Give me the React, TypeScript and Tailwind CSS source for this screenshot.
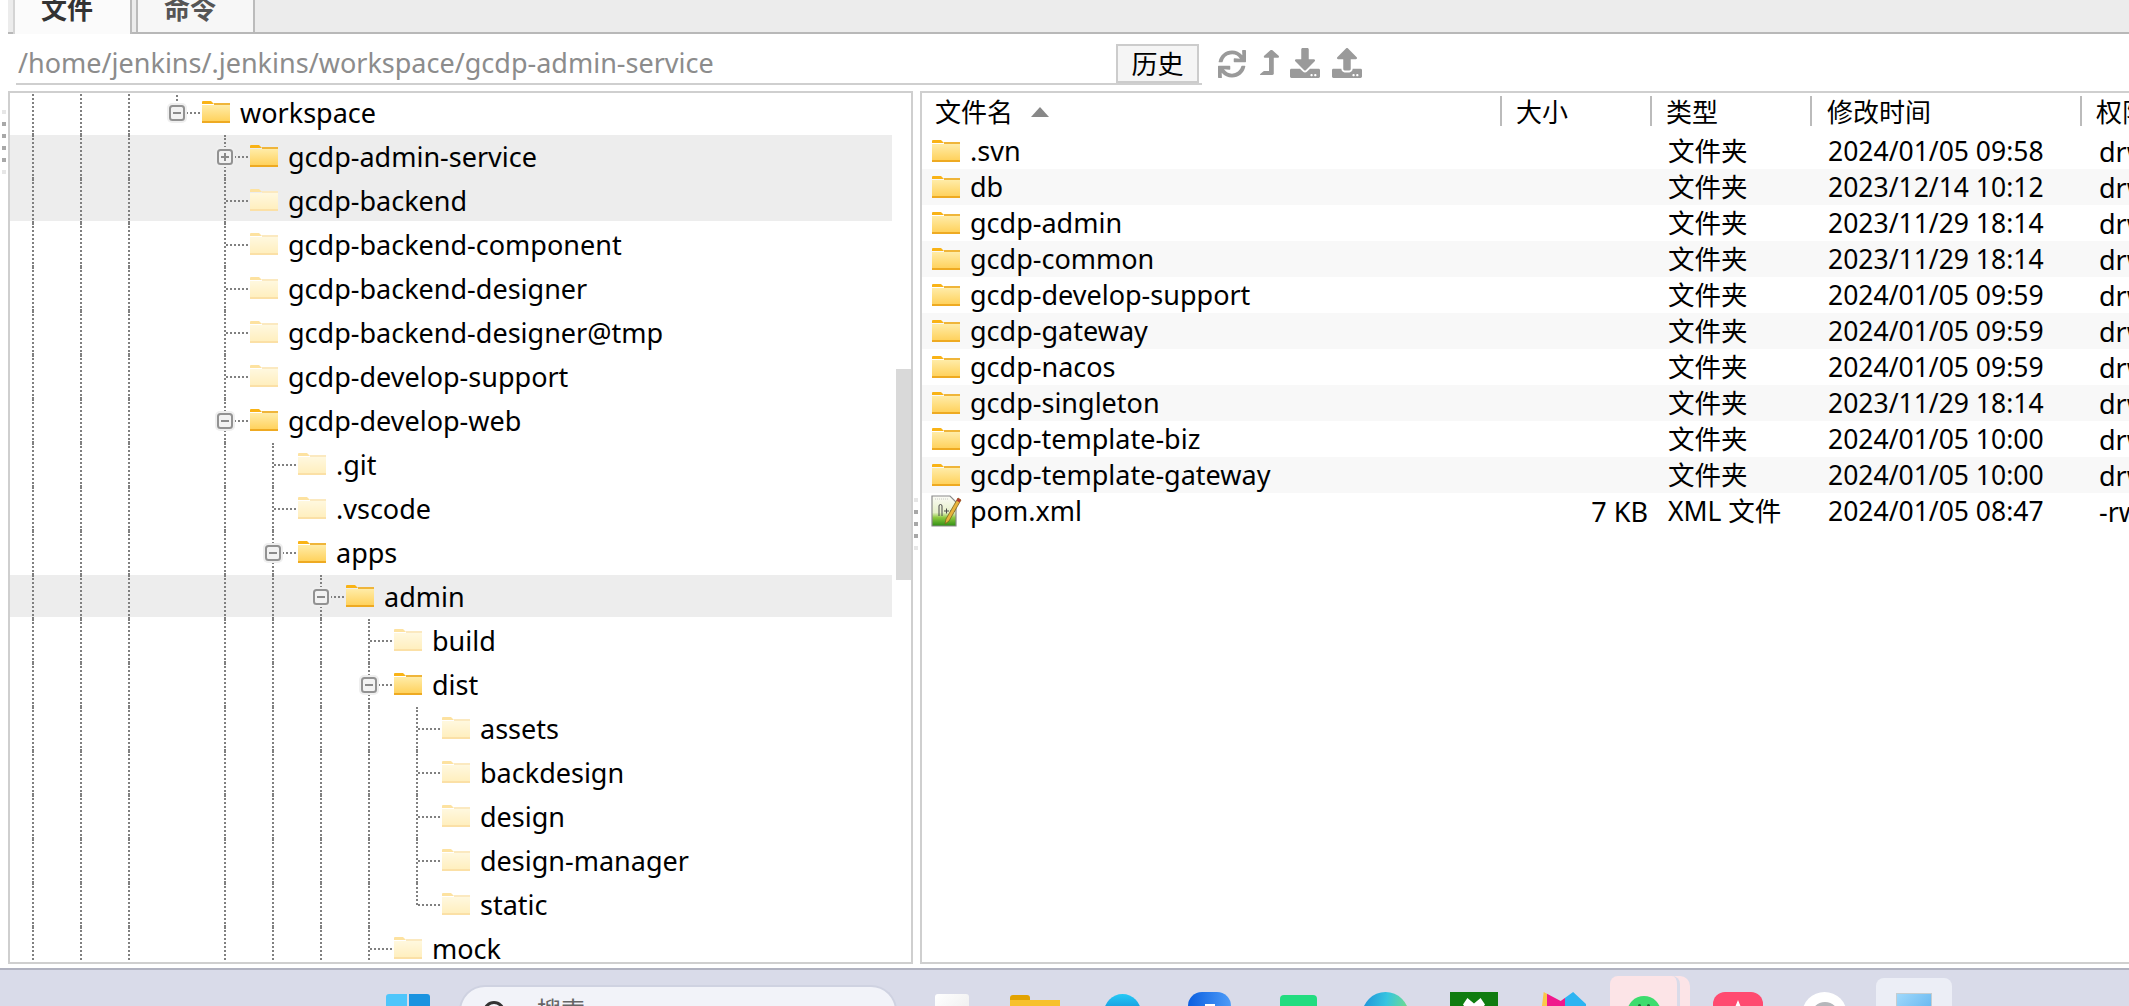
import React from "react";
import { FaSync, FaLevelUpAlt, FaDownload, FaUpload } from "react-icons/fa";

const FONT = "font-['Noto_Sans','Noto_Sans_CJK_SC',sans-serif]";

function Folder({ pale = false }: { pale?: boolean }) {
  const id = pale ? "fp" : "fa";
  return (
    <svg width="28" height="22" viewBox="0 0 28 22" className="shrink-0 block">
      <defs>
        <linearGradient id={id} x1="0" y1="0" x2="0" y2="1">
          <stop offset="0" stopColor={pale ? "#fff8df" : "#ffeca8"} />
          <stop offset="1" stopColor={pale ? "#ffeebb" : "#ffcf55"} />
        </linearGradient>
      </defs>
      <path d="M0 1a1 1 0 0 1 1-1h8l3 3h-12z" fill={pale ? "#fde2a0" : "#f9b316"} />
      <path d="M12 2h16v2h-16z" fill={pale ? "#fbe9c0" : "#efb53a"} />
      <rect x="0" y="4" width="28" height="18" fill={`url(#${id})`} />
      <rect x="0" y="20" width="28" height="2" fill={pale ? "#fbe0a6" : "#eeaa22"} />
    </svg>
  );
}

function PlusMinus({ plus = false }: { plus?: boolean }) {
  return (
    <svg width="20" height="20" viewBox="0 0 20 20" className="block">
      <rect x="0" y="0" width="20" height="20" rx="5" fill="#efefef" />
      <rect x="3" y="3" width="14" height="14" rx="2.5" fill="#f2f2f2" stroke="#929292" strokeWidth="2" />
      <rect x="6" y="9" width="8" height="2" fill="#8a8a8a" />
      {plus && <rect x="9" y="6" width="2" height="8" fill="#8a8a8a" />}
    </svg>
  );
}

type Tree = { label: string; d: number; box?: "plus" | "minus"; active?: boolean; hl?: "full" | "short"; end?: "half" };

const treeRows: Tree[] = [
  { label: "workspace", d: -1, box: "minus", active: true, end: "half" },
  { label: "gcdp-admin-service", d: 0, box: "plus", active: true, hl: "full" },
  { label: "gcdp-backend", d: 0, hl: "short" },
  { label: "gcdp-backend-component", d: 0 },
  { label: "gcdp-backend-designer", d: 0 },
  { label: "gcdp-backend-designer@tmp", d: 0 },
  { label: "gcdp-develop-support", d: 0 },
  { label: "gcdp-develop-web", d: 0, box: "minus", active: true },
  { label: ".git", d: 1 },
  { label: ".vscode", d: 1 },
  { label: "apps", d: 1, box: "minus", active: true },
  { label: "admin", d: 2, box: "minus", active: true, hl: "short" },
  { label: "build", d: 3 },
  { label: "dist", d: 3, box: "minus", active: true },
  { label: "assets", d: 4 },
  { label: "backdesign", d: 4 },
  { label: "design", d: 4 },
  { label: "design-manager", d: 4 },
  { label: "static", d: 4, end: "half" },
  { label: "mock", d: 3 },
];

function Guide() {
  return <div className="w-12 h-full shrink-0 border-l-2 border-dotted border-[#808080]" />;
}

function TreeRow({ row }: { row: Tree }) {
  const bg =
    row.hl === "full"
      ? "bg-[#ededed]"
      : row.hl === "short"
        ? "bg-[linear-gradient(#ededed_42px,transparent_42px)]"
        : "";
  return (
    <div className={`flex h-[44px] pl-[22px] items-center ${bg}`}>
      <Guide />
      <Guide />
      <Guide />
      {row.d >= 0 && <div className="w-12 h-full shrink-0" />}
      {Array.from({ length: Math.max(row.d, 0) }).map((_, i) => (
        <Guide key={i} />
      ))}
      <div className="relative w-[26px] h-full shrink-0">
        <div
          className={`absolute left-0 top-0 border-l-2 border-dotted border-[#808080] ${
            row.end === "half" ? "h-[22px]" : "h-[44px]"
          }`}
        />
        <div className="absolute left-[2px] right-[2px] top-[21px] border-t-2 border-dotted border-[#808080]" />
        {row.box && (
          <div className="absolute left-[-9px] top-[12px]">
            <PlusMinus plus={row.box === "plus"} />
          </div>
        )}
      </div>
      <div className="-mt-[2px]">
        <Folder pale={!row.active} />
      </div>
      <span className="ml-[10px] -mt-[1px] text-[27px] leading-none text-black whitespace-nowrap">{row.label}</span>
    </div>
  );
}

type FileRow = { name: string; size?: string; type: string; date: string; perm: string; pom?: boolean };
const files: FileRow[] = [
  { name: ".svn", type: "文件夹", date: "2024/01/05 09:58", perm: "drwxr-xr-x" },
  { name: "db", type: "文件夹", date: "2023/12/14 10:12", perm: "drwxr-xr-x" },
  { name: "gcdp-admin", type: "文件夹", date: "2023/11/29 18:14", perm: "drwxr-xr-x" },
  { name: "gcdp-common", type: "文件夹", date: "2023/11/29 18:14", perm: "drwxr-xr-x" },
  { name: "gcdp-develop-support", type: "文件夹", date: "2024/01/05 09:59", perm: "drwxr-xr-x" },
  { name: "gcdp-gateway", type: "文件夹", date: "2024/01/05 09:59", perm: "drwxr-xr-x" },
  { name: "gcdp-nacos", type: "文件夹", date: "2024/01/05 09:59", perm: "drwxr-xr-x" },
  { name: "gcdp-singleton", type: "文件夹", date: "2023/11/29 18:14", perm: "drwxr-xr-x" },
  { name: "gcdp-template-biz", type: "文件夹", date: "2024/01/05 10:00", perm: "drwxr-xr-x" },
  { name: "gcdp-template-gateway", type: "文件夹", date: "2024/01/05 10:00", perm: "drwxr-xr-x" },
  { name: "pom.xml", size: "7 KB", type: "XML 文件", date: "2024/01/05 08:47", perm: "-rw-r--r--", pom: true },
];

function PomIcon() {
  return (
    <svg width="31" height="32" viewBox="0 0 31 32" className="block shrink-0">
      <defs>
        <linearGradient id="pg" x1="0" y1="0" x2="0" y2="1">
          <stop offset="0" stopColor="#fbfbf6" />
          <stop offset="0.55" stopColor="#e6f0c8" />
          <stop offset="0.72" stopColor="#8cc83f" />
          <stop offset="1" stopColor="#2f8f14" />
        </linearGradient>
      </defs>
      <path d="M1 1h18l6 6v24h-24z" fill="url(#pg)" stroke="#8a8a8a" strokeWidth="1.2" />
      <path d="M4 4h13" stroke="#c8c8c8" strokeWidth="1" strokeDasharray="1 1" />
      <path d="M8 21v-10a1.5 1.5 0 0 1 3 0v10M13 16h5M15.500 13.500v5M19 16h5M21.500 13.500v5" stroke="#4a4a4a" strokeWidth="1" fill="none" />
      <path d="M27 3l3 2-12 21-4 3 1-5z" fill="#e8b33c" stroke="#7a6420" strokeWidth="0.8" />
      <path d="M27 3l3 2-1.500 2.500-3-2z" fill="#b5392f" />
    </svg>
  );
}

function Dots({ count }: { count: number }) {
  return (
    <div className="flex flex-col gap-[8px]">
      {Array.from({ length: count }).map((_, i) => (
        <div
          key={i}
          className={`w-[4px] h-[4px] ${i === 0 || i === count - 1 ? "bg-[#e6e6e6]" : "bg-[#a8a8a8]"}`}
        />
      ))}
    </div>
  );
}

const colClass = "grid grid-cols-[578px_150px_160px_270px_200px]";

function Taskbar() {
  return (
    <div className="flex items-start h-[38px] border-t-2 border-[#b0b2c0] bg-[#d9dbe9] overflow-hidden shrink-0">
      <div className="ml-[386px] mt-[24px] grid grid-cols-2 gap-[2px] w-[44px] shrink-0">
        <div className="h-[22px] bg-[#4fc6fb] rounded-tl-[3px]" />
        <div className="h-[22px] bg-[#1a93e0] rounded-tr-[3px]" />
      </div>
      <div className="ml-[29px] mt-[15px] w-[438px] h-[44px] rounded-t-[26px] bg-[#f2f3f9] border-2 border-b-0 border-[#cfd2e1] flex items-start pl-[22px] pt-[14px] shrink-0">
        <div className="w-[22px] h-[22px] rounded-full border-[3px] border-[#333] shrink-0" />
        <span className="ml-[32px] -mt-[3px] text-[24px] leading-none text-[#666]">搜索</span>
      </div>
      <div className="ml-[38px] mt-[24px] w-[34px] h-[30px] rounded-t-[3px] bg-[linear-gradient(135deg,#ffffff,#ebebeb)] shrink-0" />
      <div className="ml-[41px] mt-[25px] w-[50px] h-[24px] shrink-0">
        <div className="w-[20px] h-[5px] bg-[#e2a200] rounded-t-[3px]" />
        <div className="w-full h-[20px] bg-[#f7c12d]" />
      </div>
      <div className="ml-[44px] mt-[24px] w-[37px] h-[30px] rounded-t-full bg-[linear-gradient(#25c9f5,#0c6fc8)] shrink-0" />
      <div className="ml-[47px] mt-[22px] w-[43px] h-[30px] rounded-t-[14px] bg-[linear-gradient(90deg,#0b5fe0,#4e9cf8)] flex justify-center items-start pt-[12px] shrink-0">
        <div className="w-[10px] h-[12px] bg-white" />
      </div>
      <div className="ml-[49px] mt-[25px] w-[37px] h-[30px] rounded-t-[4px] bg-[#22dc80] shrink-0" />
      <div className="ml-[45px] mt-[22px] w-[47px] h-[30px] rounded-t-full bg-[linear-gradient(100deg,#1c8fd8,#36c5e0,#7be07e)] shrink-0" />
      <div className="ml-[41px] mt-[22px] w-[48px] h-[30px] bg-[#107c10] flex justify-center pt-[6px] shrink-0">
        <div className="w-[22px] h-[22px] bg-white [clip-path:polygon(50%_25%,80%_0,100%_30%,50%_100%,0_30%,20%_0)]" />
      </div>
      <div className="ml-[42px] mt-[22px] w-[46px] h-[30px] bg-[linear-gradient(90deg,#fbc84a_0_15%,#f0188c_15%_55%,#2db4f2_55%)] [clip-path:polygon(8%_0,45%_30%,72%_0,100%_40%,100%_100%,0_100%)] flex justify-center pt-[16px] shrink-0">
        <div className="w-[28px] h-[14px] bg-[#1a1020]" />
      </div>
      <div className="ml-[24px] mt-[6px] w-[80px] h-[40px] shrink-0 relative">
        <div className="absolute right-0 top-0 w-[20px] h-full rounded-tr-[10px] bg-[#fce4e7]" />
        <div className="absolute left-0 top-0 w-[70px] h-full rounded-t-[8px] bg-[#fce4e7] border-r-[3px] border-[#d9dbe9] flex justify-center pt-[20px]">
          <div className="w-[34px] h-[34px] rounded-full bg-[#3ddc6e] flex justify-center gap-[6px] pt-[8px]">
            <div className="w-[3px] h-[5px] rounded-full bg-[#1d6e37]" />
            <div className="w-[3px] h-[5px] rounded-full bg-[#1d6e37]" />
          </div>
        </div>
      </div>
      <div className="ml-[23px] mt-[22px] w-[50px] h-[30px] rounded-t-[12px] bg-[#ff4b70] flex justify-center pt-[8px] shrink-0">
        <div className="w-[18px] h-[22px] bg-white [clip-path:polygon(50%_0,100%_100%,60%_100%,50%_60%,40%_100%,0_100%)]" />
      </div>
      <div className="ml-[39px] mt-[22px] w-[45px] h-[45px] rounded-full bg-white flex justify-center pt-[10px] shrink-0">
        <div className="w-[28px] h-[28px] rounded-full bg-[#b5b7bb]" />
      </div>
      <div className="ml-[29px] mt-[8px] w-[76px] h-[40px] rounded-t-[8px] bg-[#eceef6] flex justify-center pt-[15px] shrink-0">
        <div className="w-[36px] h-[30px] border border-[#c5cdd0] bg-[linear-gradient(135deg,#9fd8fb,#5ab0ee)]" />
      </div>
    </div>
  );
}

export default function App() {
  return (
    <div className={`${FONT} w-[2129px] h-[1006px] overflow-hidden bg-white flex flex-col text-black`}>
      {/* tab strip */}
      <div className="ml-[8px] h-[34px] shrink-0 bg-[#ececec] border-b-2 border-[#b8b8b8] flex items-end pl-[5px]">
        <div className="relative w-[119px] h-[34px] -mb-[2px] pr-[11px] bg-[#fbfbfb] border-l-2 border-r-2 border-l-[#d4d4d4] border-r-[#bbbbbb] flex justify-center overflow-hidden shrink-0">
          <span className="text-[26px] font-bold text-[#333] leading-none -mt-[4px]">文件</span>
        </div>
        <div className="ml-[4px] w-[119px] h-[32px] pr-[11px] bg-[#f7f7f7] border-l-2 border-r-2 border-[#bbbbbb] flex justify-center overflow-hidden shrink-0">
          <span className="text-[26px] font-bold text-[#555] leading-none -mt-[4px]">命令</span>
        </div>
      </div>
      {/* path row */}
      <div className="h-[57px] shrink-0 flex items-start relative">
        <div className="ml-[16px] mt-[10px] w-[1186px] h-[41px] border-b-2 border-[#cfcfcf] flex items-start">
          <span className="w-[1100px] pl-[2px] text-[27px] leading-[38px] text-[#8c8c8c] whitespace-nowrap">
            /home/jenkins/.jenkins/workspace/gcdp-admin-service
          </span>
          <div className="w-[83px] h-[39px] bg-[#f5f5f5] border-2 border-[#cccccc] flex items-center justify-center text-[26px] leading-none">
            历史
          </div>
        </div>
        <div className="ml-[16px] mt-[14px] flex items-start text-[#9a9a9a]">
          <FaSync size={28} className="mt-[2px]" />
          <FaLevelUpAlt className="ml-[14px] mt-[2px]" style={{ width: 19, height: 25 }} preserveAspectRatio="none" />
          <FaDownload size={30} className="ml-[11px]" />
          <FaUpload size={30} className="ml-[12px]" />
        </div>
      </div>
      {/* panels */}
      <div className="flex h-[873px] shrink-0">
        <div className="w-[8px] shrink-0 pt-[19px] pl-[2px]">
          <Dots count={6} />
        </div>
        <div className="relative w-[905px] shrink-0 border-2 border-[#cfcfcf] overflow-hidden">
          <div className="w-[882px] -mt-[2px]">
            {treeRows.map((r) => (
              <TreeRow key={r.label} row={r} />
            ))}
          </div>
          <div className="absolute left-[886px] top-[276px] w-[15px] h-[211px] bg-[#d9d9d9]" />
        </div>
        <div className="w-[7px] shrink-0 pt-[407px] pl-[1px]">
          <Dots count={5} />
        </div>
        <div className="flex-1 min-w-0 border-2 border-r-0 border-[#cfcfcf] overflow-hidden">
          <div className={`${colClass} h-[40px] text-[26px] leading-none items-start pt-[3px]`}>
            <div className="pl-[13px] h-[30px] pt-[1px] flex items-center">
              <span>文件名</span>
              <svg width="18" height="10" viewBox="0 0 18 10" className="ml-[18px]">
                <path d="M9 0l9 10h-18z" fill="#888888" />
              </svg>
            </div>
            <div className="h-[30px] pt-[2px] border-l-2 border-[#bbbbbb] pl-[14px] flex items-center">大小</div>
            <div className="h-[30px] pt-[2px] border-l-2 border-[#bbbbbb] pl-[14px] flex items-center">类型</div>
            <div className="h-[30px] pt-[2px] border-l-2 border-[#bbbbbb] pl-[15px] flex items-center">修改时间</div>
            <div className="h-[30px] pt-[2px] border-l-2 border-[#bbbbbb] pl-[14px] flex items-center">权限</div>
          </div>
          {files.map((f, i) => (
            <div
              key={f.name}
              className={`${colClass} h-[36px] text-[27px] leading-none items-center ${i % 2 === 1 ? "bg-[#f8f8f8]" : ""}`}
            >
              <div className="pl-[10px] flex items-center">
                <div className="w-[28px] flex justify-center shrink-0">{f.pom ? <PomIcon /> : <Folder />}</div>
                <span className="ml-[10px] -mt-[1px] whitespace-nowrap">{f.name}</span>
              </div>
              <div className="text-right pr-[2px] whitespace-nowrap">{f.size}</div>
              <div className="pl-[18px] text-[26.5px] whitespace-nowrap">{f.type}</div>
              <div className="pl-[18px] text-[26.5px] whitespace-nowrap">{f.date}</div>
              <div className="pl-[19px] whitespace-nowrap">{f.perm}</div>
            </div>
          ))}
        </div>
      </div>
      <div className="h-[4px] shrink-0" />
      <Taskbar />
    </div>
  );
}
